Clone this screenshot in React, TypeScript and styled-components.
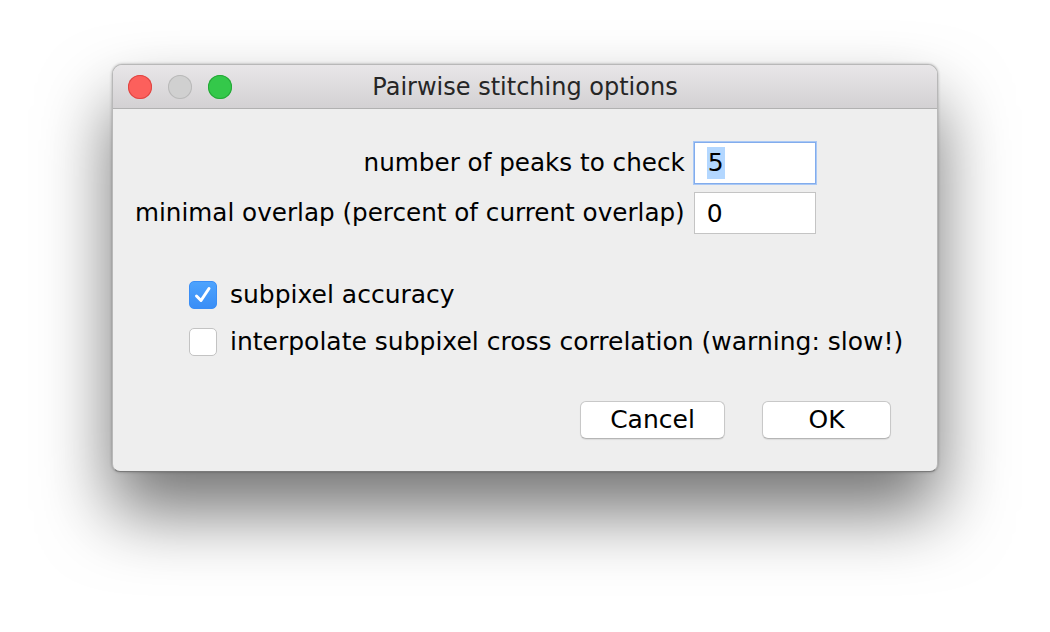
import React, { useState } from "react";
import styled, { createGlobalStyle } from "styled-components";

const GlobalStyle = createGlobalStyle`
	html, body {
		margin: 0;
		padding: 0;
		background: #ffffff;
	}
	body {
		font-family: "DejaVu Sans", "Liberation Sans", sans-serif;
	}
`;

const Page = styled.div`
	width: 1050px;
	height: 632px;
	padding: 64px 0 0 112px;
	box-sizing: border-box;
	overflow: hidden;
`;

const Window = styled.div`
	width: 826px;
	height: 408px;
	background: #eeeeee;
	border-radius: 10px 10px 8px 8px;
	border: 1px solid #b8b8b8;
	border-bottom-color: #7a7a7a;
	box-sizing: border-box;
	box-shadow: 0 40px 70px rgba(0, 0, 0, 0.55), 0 0 3px rgba(0, 0, 0, 0.3);
	display: flex;
	flex-direction: column;
	overflow: hidden;
`;

const TitleBar = styled.div`
	position: relative;
	height: 43px;
	flex-shrink: 0;
	background: linear-gradient(#e8e6e8, #d3d1d3);
	border-bottom: 1px solid #b1b1b1;
	display: flex;
	align-items: center;
	justify-content: center;
`;

const Lights = styled.div`
	position: absolute;
	left: 15px;
	top: 10px;
	display: flex;
	gap: 16px;
`;

const Light = styled.span<{ $color: string; $edge: string }>`
	width: 24px;
	height: 24px;
	border-radius: 50%;
	background: ${(p) => p.$color};
	box-shadow: inset 0 0 0 1px ${(p) => p.$edge};
`;

const Title = styled.div`
	font-size: 24px;
	line-height: 28px;
	color: #262626;
	margin-top: 1px;
`;

const Body = styled.div`
	flex: 1;
	display: flex;
	flex-direction: column;
	padding: 33px 0 0 22px;
`;

const Fields = styled.div`
	display: grid;
	grid-template-columns: auto 122px;
	column-gap: 9px;
	row-gap: 8px;
	align-items: center;
	width: max-content;
`;

const Label = styled.label`
	font-size: 24.65px;
	line-height: 30px;
	color: #000;
	text-align: right;
`;

const Field = styled.div<{ $focused?: boolean }>`
	height: 42px;
	box-sizing: border-box;
	background: #fff;
	border: 1px solid ${(p) => (p.$focused ? "#82acec" : "#c4c4c4")};
	box-shadow: ${(p) => (p.$focused ? "0 0 0 1px #a9c8f5" : "none")};
	display: flex;
	align-items: center;
	padding-left: 12px;
	font-size: 25px;
	color: #000;
`;

const Selected = styled.span`
	background: #b3d7ff;
	padding: 0 1px;
	line-height: 32px;
`;

const Checks = styled.div`
	display: flex;
	flex-direction: column;
	gap: 19px;
	padding: 47px 0 0 54px;
`;

const CheckRow = styled.label`
	display: flex;
	align-items: center;
	gap: 13px;
	height: 28px;
	font-size: 25px;
	line-height: 28px;
	color: #000;
	cursor: default;
`;

const Box = styled.span<{ $on: boolean }>`
	width: 28px;
	height: 28px;
	flex-shrink: 0;
	box-sizing: border-box;
	border-radius: 5px;
	background: ${(p) => (p.$on ? "linear-gradient(#4da3fd, #3a8ef6)" : "#fff")};
	border: 1px solid ${(p) => (p.$on ? "#3a8ef6" : "#c3c3c3")};
	display: flex;
	align-items: center;
	justify-content: center;
`;

const Buttons = styled.div`
	display: flex;
	justify-content: flex-end;
	gap: 37px;
	padding: 45px 46px 0 0;
`;

const Button = styled.button<{ $w: number }>`
	width: ${(p) => p.$w}px;
	height: 38px;
	background: #fff;
	border: 1px solid #c8c8c8;
	border-bottom-color: #b5b5b5;
	border-radius: 6px;
	box-shadow: 0 1px 1px rgba(0, 0, 0, 0.08);
	font-family: "DejaVu Sans", "Liberation Sans", sans-serif;
	font-size: 25px;
	line-height: 30px;
	color: #000;
	padding: 0;
`;

function Check({ on }: { on: boolean }) {
	return (
		<Box $on={on}>
			{on && (
				<svg width="20" height="20" viewBox="0 0 20 20">
					<path d="M3.5 11 L8 15.5 L16 3.5" fill="none" stroke="#fff" strokeWidth="3" strokeLinecap="round" strokeLinejoin="round" />
				</svg>
			)}
		</Box>
	);
}

export default function App() {
	const [subpixel, setSubpixel] = useState(true);
	const [interp, setInterp] = useState(false);

	return (
		<>
			<GlobalStyle />
			<Page>
				<Window>
					<TitleBar>
						<Lights>
							<Light $color="#fc605c" $edge="#de4643" />
							<Light $color="#d0d0d0" $edge="#b9b9b9" />
							<Light $color="#34c84a" $edge="#25a737" />
						</Lights>
						<Title>Pairwise stitching options</Title>
					</TitleBar>
					<Body>
						<Fields>
							<Label>number of peaks to check</Label>
							<Field $focused>
								<Selected>5</Selected>
							</Field>
							<Label>minimal overlap (percent of current overlap)</Label>
							<Field>0</Field>
						</Fields>
						<Checks>
							<CheckRow onClick={() => setSubpixel(!subpixel)}>
								<Check on={subpixel} />
								subpixel accuracy
							</CheckRow>
							<CheckRow onClick={() => setInterp(!interp)}>
								<Check on={interp} />
								interpolate subpixel cross correlation (warning: slow!)
							</CheckRow>
						</Checks>
						<Buttons>
							<Button $w={145}>Cancel</Button>
							<Button $w={129}>OK</Button>
						</Buttons>
					</Body>
				</Window>
			</Page>
		</>
	);
}
